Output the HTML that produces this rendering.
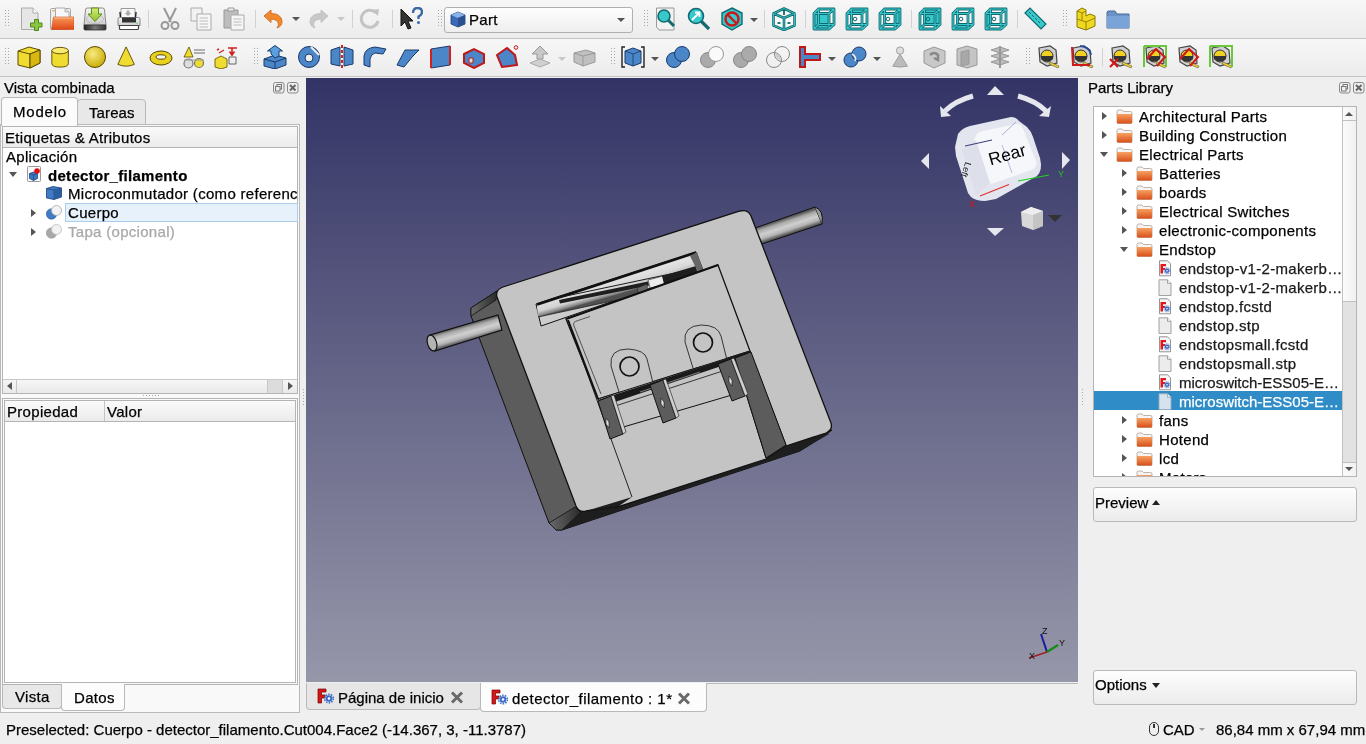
<!DOCTYPE html>
<html><head><meta charset="utf-8">
<style>
*{box-sizing:border-box;margin:0;padding:0}
html,body{width:1366px;height:744px;overflow:hidden;background:#efefef;font-family:"Liberation Sans",sans-serif;font-size:15px;color:#000;position:relative}
.a{position:absolute}
.t{position:absolute;white-space:nowrap;line-height:19px;letter-spacing:0.3px;will-change:transform;-webkit-text-stroke:0.25px currentColor}
.tb{position:absolute;left:0;width:1366px;background:linear-gradient(#f7f7f7,#ececec)}
.grip{position:absolute;width:4px;height:17px;background-image:linear-gradient(90deg,#b4b4b4 1px,transparent 1px),linear-gradient(#efefef 2px,transparent 1px);background-size:3px 3px,3px 3px}
.sep{position:absolute;width:1px;height:18px;background:#d2d2d2}
.dd{position:absolute;width:0;height:0;border-left:4px solid transparent;border-right:4px solid transparent;border-top:4px solid #555}
.ddg{position:absolute;width:0;height:0;border-left:4px solid transparent;border-right:4px solid transparent;border-top:4px solid #bbb}
svg.ic{position:absolute;width:24px;height:24px;overflow:visible}
</style></head><body>

<!-- toolbar row 1 -->
<div class="tb" style="top:0;height:38px"></div>
<div class="a" style="top:38px;left:0;width:1366px;height:1px;background:#c4c4c4"></div>
<div class="tb" style="top:39px;height:37px"></div>
<div class="a" style="top:76px;left:0;width:1366px;height:1px;background:#c4c4c4"></div>

<!-- TB START -->
<svg width="0" height="0" style="position:absolute"><defs>
<linearGradient id="ogr" x1="0" y1="0" x2="0" y2="1"><stop offset="0" stop-color="#f89858"/><stop offset="1" stop-color="#e04818"/></linearGradient>
<linearGradient id="hdd" x1="0" y1="0" x2="0" y2="1"><stop offset="0" stop-color="#f4f4f4"/><stop offset="1" stop-color="#cfcfcf"/></linearGradient><linearGradient id="hdb" x1="0" y1="0" x2="1" y2="0"><stop offset="0" stop-color="#222"/><stop offset="0.5" stop-color="#777"/><stop offset="1" stop-color="#333"/></linearGradient><linearGradient id="grn" x1="0" y1="0" x2="0" y2="1"><stop offset="0" stop-color="#d8ec70"/><stop offset="1" stop-color="#8cc030"/></linearGradient>
<radialGradient id="sgr" cx="0.4" cy="0.35" r="0.7"><stop offset="0" stop-color="#f8ec80"/><stop offset="1" stop-color="#c8a800"/></radialGradient>
</defs></svg>
<svg class="a" style="left:5px;top:10px" width="4" height="18"><rect x="0" y="0" width="1" height="1" fill="#a8a8a8"/><rect x="0" y="3" width="1" height="1" fill="#a8a8a8"/><rect x="0" y="6" width="1" height="1" fill="#a8a8a8"/><rect x="0" y="9" width="1" height="1" fill="#a8a8a8"/><rect x="0" y="12" width="1" height="1" fill="#a8a8a8"/><rect x="0" y="15" width="1" height="1" fill="#a8a8a8"/><rect x="3" y="0" width="1" height="1" fill="#a8a8a8"/><rect x="3" y="3" width="1" height="1" fill="#a8a8a8"/><rect x="3" y="6" width="1" height="1" fill="#a8a8a8"/><rect x="3" y="9" width="1" height="1" fill="#a8a8a8"/><rect x="3" y="12" width="1" height="1" fill="#a8a8a8"/><rect x="3" y="15" width="1" height="1" fill="#a8a8a8"/></svg>
<svg class="a" style="left:19px;top:7px" width="24" height="24" viewBox="0 0 24 24"><path d="M2.5 1 L14 1 L19 6 L19 22.5 L2.5 22.5 Z" fill="#e6e6e6" stroke="#aaa"/><path d="M14 1 L14 6 L19 6" fill="#fff" stroke="#aaa"/><path d="M13 12 L17 12 L17 8.5 L21 8.5 L21 12 L24.5 12 L24.5 16 L21 16 L21 19.5 L17 19.5 L17 16 L13 16 Z" transform="translate(-1.5,4)" fill="#8cc63f" stroke="#4a8a1a"/></svg>
<svg class="a" style="left:50px;top:7px" width="24" height="24" viewBox="0 0 24 24"><rect x="0.5" y="1.5" width="20" height="21" rx="1" fill="#eeeeee" stroke="#a8a8a8"/><path d="M2 3.8 L5 3.8" stroke="#f0a040" stroke-width="1"/><path d="M5.5 1 L15 1 L19 5 L19 12 L5.5 12 Z" fill="#f8f8f8" stroke="#aaa"/><path d="M15 1 L15 5 L19 5" fill="#ddd" stroke="#aaa" stroke-width="0.8"/><path d="M3.5 10 L24 10 L24 22.5 L1.5 22.5 Z" fill="url(#ogr)" stroke="#d04818" stroke-width="0.6"/><path d="M4 11 L23 11" stroke="#fbc090" stroke-width="1"/></svg>
<svg class="a" style="left:83px;top:7px" width="24" height="24" viewBox="0 0 24 24"><path d="M2.5 3 Q2.5 1 4.5 1 L19.5 1 Q21.5 1 21.5 3 L23 18 L1 18 Z" fill="url(#hdd)" stroke="#8a8a8a"/><ellipse cx="12" cy="12" rx="8.5" ry="4.5" fill="none" stroke="#bbb" stroke-width="1"/><path d="M1 18 L23 18 L23 22 Q23 23 22 23 L2 23 Q1 23 1 22 Z" fill="url(#hdb)" stroke="#333" stroke-width="0.8"/><path d="M8.5 1 L15.5 1 L15.5 7 L19 7 L12 14.5 L5 7 L8.5 7 Z" fill="url(#grn)" stroke="#4a8a10" stroke-width="0.9"/></svg>
<svg class="a" style="left:117px;top:7px" width="24" height="24" viewBox="0 0 24 24"><path d="M4 1.5 L18 1.5 L18 11 L4 11 Z" fill="#f8f8f8" stroke="#999"/><path d="M9.5 3.5 L12.5 3.5 L12.5 6 L14.5 6 L11 9 L7.5 6 L9.5 6 Z" fill="#aaa"/><path d="M3 5 L3.5 11 M19 5 L18.5 11" stroke="#222" stroke-width="1.4"/><path d="M1 12 Q1 10.5 2.5 10.5 L21.5 10.5 Q23 10.5 23 12 L23 18.5 L1 18.5 Z" fill="url(#hdd)" stroke="#888"/><path d="M5 10.5 L19 10.5 L19 15.5 L5 15.5 Z" fill="#333"/><circle cx="20" cy="16.2" r="0.8" fill="#6c6"/><path d="M2.5 18.5 L21.5 18.5 L21.5 21.5 Q21.5 22.5 20.5 22.5 L3.5 22.5 Q2.5 22.5 2.5 21.5 Z" fill="#fff" stroke="#444" stroke-width="1.2"/></svg>
<div class="sep" style="left:148px;top:10px"></div>
<svg class="a" style="left:158px;top:7px" width="24" height="24" viewBox="0 0 24 24"><path d="M6 1 L13 15 M18 1 L11 15" stroke="#999" stroke-width="2"/><circle cx="7" cy="18.5" r="3.5" fill="none" stroke="#999" stroke-width="2"/><circle cx="17" cy="18.5" r="3.5" fill="none" stroke="#999" stroke-width="2"/></svg>
<svg class="a" style="left:189px;top:7px" width="24" height="24" viewBox="0 0 24 24"><path d="M2 1 L13 1 L13 14 L2 14 Z" fill="#f2f2f2" stroke="#aaa"/><path d="M8 7 L22 7 L22 23 L8 23 Z" fill="#f6f6f6" stroke="#aaa"/><path d="M10.5 11 L19 11 M10.5 14 L19 14 M10.5 17 L19 17 M10.5 20 L19 20" stroke="#bbb"/></svg>
<svg class="a" style="left:222px;top:7px" width="24" height="24" viewBox="0 0 24 24"><path d="M2 3 L16 3 L16 21 L2 21 Z" fill="#bdbdbd" stroke="#999"/><path d="M6 1 L12 1 L12 4 L6 4 Z" fill="#eee" stroke="#999"/><path d="M9 8 L22 8 L22 23 L9 23 Z" fill="#f6f6f6" stroke="#aaa"/><path d="M11.5 12 L19.5 12 M11.5 15 L19.5 15 M11.5 18 L19.5 18" stroke="#bbb"/></svg>
<div class="sep" style="left:255px;top:10px"></div>
<svg class="a" style="left:261px;top:7px" width="24" height="24" viewBox="0 0 24 24"><path d="M3 9 L10 3 L10 6.5 Q20 6.5 21 14 Q21.5 19 16 21 Q19 17 15.5 13.5 Q13 12 10 12 L10 15.5 Z" fill="#f08a30" stroke="#d06010" stroke-width="0.8"/></svg>
<div class="a" style="left:292px;top:17px;width:0;height:0;border-left:4px solid transparent;border-right:4px solid transparent;border-top:4px solid #555"></div>
<svg class="a" style="left:307px;top:7px" width="24" height="24" viewBox="0 0 24 24"><path d="M21 9 L14 3 L14 6.5 Q4 6.5 3 14 Q2.5 19 8 21 Q5 17 8.5 13.5 Q11 12 14 12 L14 15.5 Z" fill="#c8c8c8" stroke="#bbb" stroke-width="0.8"/></svg>
<div class="a" style="left:337px;top:17px;width:0;height:0;border-left:4px solid transparent;border-right:4px solid transparent;border-top:4px solid #c8c8c8"></div>
<div class="sep" style="left:352px;top:10px"></div>
<svg class="a" style="left:358px;top:7px" width="24" height="24" viewBox="0 0 24 24"><path d="M18 6 A8.5 8.5 0 1 0 20 14" fill="none" stroke="#c4c4c4" stroke-width="3"/><path d="M14 3 L21 2 L20 9 Z" fill="#c4c4c4"/></svg>
<div class="sep" style="left:392px;top:10px"></div>
<svg class="a" style="left:399px;top:7px" width="24" height="24" viewBox="0 0 24 24"><path d="M2 2 L2 19 L6 15 L9 22 L12 21 L9 14 L14 14 Z" fill="#333" stroke="#111"/><path d="M14 6 Q14 1 18.5 1 Q23 1 23 5 Q23 8 19.5 9.5 L19.5 12" fill="none" stroke="#3a6aa8" stroke-width="2.4"/><circle cx="19.5" cy="15.5" r="1.5" fill="#3a6aa8"/></svg>
<svg class="a" style="left:438px;top:10px" width="4" height="18"><rect x="0" y="0" width="1" height="1" fill="#a8a8a8"/><rect x="0" y="3" width="1" height="1" fill="#a8a8a8"/><rect x="0" y="6" width="1" height="1" fill="#a8a8a8"/><rect x="0" y="9" width="1" height="1" fill="#a8a8a8"/><rect x="0" y="12" width="1" height="1" fill="#a8a8a8"/><rect x="0" y="15" width="1" height="1" fill="#a8a8a8"/><rect x="3" y="0" width="1" height="1" fill="#a8a8a8"/><rect x="3" y="3" width="1" height="1" fill="#a8a8a8"/><rect x="3" y="6" width="1" height="1" fill="#a8a8a8"/><rect x="3" y="9" width="1" height="1" fill="#a8a8a8"/><rect x="3" y="12" width="1" height="1" fill="#a8a8a8"/><rect x="3" y="15" width="1" height="1" fill="#a8a8a8"/></svg>
<div class="a" style="left:444px;top:7px;width:189px;height:26px;border:1px solid #b0b0b0;border-radius:3px;background:linear-gradient(#fefefe,#eeeeee)"></div>
<svg class="a" style="left:449px;top:11px" width="17" height="17" viewBox="0 0 17 17"><path d="M2 4 L9 1 L16 4 L16 13 L9 16 L2 13 Z" fill="#3a6ab8" stroke="#1a3a78" stroke-width="0.8"/><path d="M2 4 L9 1 L16 4 L9 7 Z" fill="#8ab4e8"/><path d="M9 7 L16 4 L16 13 L9 16 Z" fill="#2a5090"/></svg>
<div class="t" style="left:469px;top:10px">Part</div>
<div class="a" style="left:617px;top:18px;width:0;height:0;border-left:4px solid transparent;border-right:4px solid transparent;border-top:4px solid #555"></div>
<svg class="a" style="left:644px;top:10px" width="4" height="18"><rect x="0" y="0" width="1" height="1" fill="#a8a8a8"/><rect x="0" y="3" width="1" height="1" fill="#a8a8a8"/><rect x="0" y="6" width="1" height="1" fill="#a8a8a8"/><rect x="0" y="9" width="1" height="1" fill="#a8a8a8"/><rect x="0" y="12" width="1" height="1" fill="#a8a8a8"/><rect x="0" y="15" width="1" height="1" fill="#a8a8a8"/><rect x="3" y="0" width="1" height="1" fill="#a8a8a8"/><rect x="3" y="3" width="1" height="1" fill="#a8a8a8"/><rect x="3" y="6" width="1" height="1" fill="#a8a8a8"/><rect x="3" y="9" width="1" height="1" fill="#a8a8a8"/><rect x="3" y="12" width="1" height="1" fill="#a8a8a8"/><rect x="3" y="15" width="1" height="1" fill="#a8a8a8"/></svg>
<svg class="a" style="left:655px;top:7px" width="24" height="24" viewBox="0 0 24 24"><path d="M1.5 1 L19 1 L19 23 L4 23 L1.5 20 Z" fill="#f2f2f2" stroke="#999"/><circle cx="9" cy="9" r="6" fill="#37c8cc" stroke="#126a70" stroke-width="1.6"/><path d="M13 13 L19 19" stroke="#126a70" stroke-width="3"/></svg>
<svg class="a" style="left:687px;top:7px" width="24" height="24" viewBox="0 0 24 24"><circle cx="9" cy="9" r="7.5" fill="#37c8cc" stroke="#126a70" stroke-width="1.6"/><path d="M14 14 L22 22" stroke="#126a70" stroke-width="3.2"/><path d="M5 13 L12 6 M8 5.5 L12.5 5.5 L12.5 10" stroke="#fff" stroke-width="1.8" fill="none"/></svg>
<svg class="a" style="left:720px;top:7px" width="24" height="24" viewBox="0 0 24 24"><path d="M12 1 L22 6 L22 17 L12 23 L2 17 L2 6 Z" fill="#37c8cc" stroke="#126a70" stroke-width="1.4"/><circle cx="12" cy="12" r="6.5" fill="none" stroke="#c81818" stroke-width="2.4"/><path d="M7.5 7.5 L16.5 16.5" stroke="#c81818" stroke-width="2.4"/></svg>
<div class="a" style="left:750px;top:18px;width:0;height:0;border-left:4px solid transparent;border-right:4px solid transparent;border-top:4px solid #555"></div>
<div class="sep" style="left:764px;top:10px"></div>
<svg class="a" style="left:772px;top:7px" width="24" height="24" viewBox="0 0 24 24"><path d="M12 1.5 L22.5 6.5 L22.5 18.5 L12 23 L1.5 18.5 L1.5 6.5 Z M1.5 6.5 L12 11 L22.5 6.5 M12 11 L12 23" fill="#fafafa" stroke="#126a70" stroke-width="2.6" stroke-linejoin="round"/><path d="M12 1.5 L22.5 6.5 L22.5 18.5 L12 23 L1.5 18.5 L1.5 6.5 Z M1.5 6.5 L12 11 L22.5 6.5 M12 11 L12 23" fill="none" stroke="#37c8cc" stroke-width="0.9" stroke-linejoin="round"/><path d="M12 4 L12 8" stroke="#126a70" stroke-width="1.8"/><ellipse cx="7" cy="16" rx="1.8" ry="1" fill="#126a70"/><ellipse cx="17" cy="16" rx="1.8" ry="1" fill="#126a70"/></svg>
<div class="sep" style="left:805px;top:10px"></div>
<svg class="a" style="left:812px;top:7px" width="24" height="24" viewBox="0 0 24 24"><path d="M2 6.5 L6.5 2 L22 2 L22 17.5 L17 22 L2 22 Z" fill="#f8f8f8"/><path d="M2 6.5 L17 6.5 L17 22 L2 22 Z" fill="#37c8cc"/><path d="M2 6.5 L17 6.5 L17 22 L2 22 Z M6.5 2 L22 2 L22 17.5 L6.5 17.5 Z M2 6.5 L6.5 2 M17 6.5 L22 2 M17 22 L22 17.5 M2 22 L6.5 17.5" fill="none" stroke="#126a70" stroke-width="2.8" stroke-linejoin="round"/><path d="M2 6.5 L17 6.5 L17 22 L2 22 Z M6.5 2 L22 2 L22 17.5 L6.5 17.5 Z M2 6.5 L6.5 2 M17 6.5 L22 2 M17 22 L22 17.5 M2 22 L6.5 17.5" fill="none" stroke="#37c8cc" stroke-width="1.1" stroke-linejoin="round"/></svg>
<svg class="a" style="left:845px;top:7px" width="24" height="24" viewBox="0 0 24 24"><path d="M2 6.5 L6.5 2 L22 2 L22 17.5 L17 22 L2 22 Z" fill="#f8f8f8"/><path d="M2 6.5 L17 6.5 L22 2 L6.5 2 Z" fill="#37c8cc"/><path d="M2 6.5 L17 6.5 L17 22 L2 22 Z M6.5 2 L22 2 L22 17.5 L6.5 17.5 Z M2 6.5 L6.5 2 M17 6.5 L22 2 M17 22 L22 17.5 M2 22 L6.5 17.5" fill="none" stroke="#126a70" stroke-width="2.8" stroke-linejoin="round"/><path d="M2 6.5 L17 6.5 L17 22 L2 22 Z M6.5 2 L22 2 L22 17.5 L6.5 17.5 Z M2 6.5 L6.5 2 M17 6.5 L22 2 M17 22 L22 17.5 M2 22 L6.5 17.5" fill="none" stroke="#37c8cc" stroke-width="1.1" stroke-linejoin="round"/><circle cx="10" cy="12" r="1.8" fill="none" stroke="#126a70" stroke-width="1"/><path d="M6 17 L9 16" stroke="#126a70" stroke-width="1.2"/></svg>
<svg class="a" style="left:878px;top:7px" width="24" height="24" viewBox="0 0 24 24"><path d="M2 6.5 L6.5 2 L22 2 L22 17.5 L17 22 L2 22 Z" fill="#f8f8f8"/><path d="M17 6.5 L22 2 L22 17.5 L17 22 Z" fill="#37c8cc"/><path d="M2 6.5 L17 6.5 L17 22 L2 22 Z M6.5 2 L22 2 L22 17.5 L6.5 17.5 Z M2 6.5 L6.5 2 M17 6.5 L22 2 M17 22 L22 17.5 M2 22 L6.5 17.5" fill="none" stroke="#126a70" stroke-width="2.8" stroke-linejoin="round"/><path d="M2 6.5 L17 6.5 L17 22 L2 22 Z M6.5 2 L22 2 L22 17.5 L6.5 17.5 Z M2 6.5 L6.5 2 M17 6.5 L22 2 M17 22 L22 17.5 M2 22 L6.5 17.5" fill="none" stroke="#37c8cc" stroke-width="1.1" stroke-linejoin="round"/><circle cx="10" cy="12" r="1.8" fill="none" stroke="#126a70" stroke-width="1"/><path d="M6 17 L9 16" stroke="#126a70" stroke-width="1.2"/></svg>
<div class="sep" style="left:911px;top:10px"></div>
<svg class="a" style="left:918px;top:7px" width="24" height="24" viewBox="0 0 24 24"><path d="M2 6.5 L6.5 2 L22 2 L22 17.5 L17 22 L2 22 Z" fill="#f8f8f8"/><path d="M6.5 2 L22 2 L22 17.5 L6.5 17.5 Z" fill="#37c8cc"/><path d="M2 6.5 L17 6.5 L17 22 L2 22 Z M6.5 2 L22 2 L22 17.5 L6.5 17.5 Z M2 6.5 L6.5 2 M17 6.5 L22 2 M17 22 L22 17.5 M2 22 L6.5 17.5" fill="none" stroke="#126a70" stroke-width="2.8" stroke-linejoin="round"/><path d="M2 6.5 L17 6.5 L17 22 L2 22 Z M6.5 2 L22 2 L22 17.5 L6.5 17.5 Z M2 6.5 L6.5 2 M17 6.5 L22 2 M17 22 L22 17.5 M2 22 L6.5 17.5" fill="none" stroke="#37c8cc" stroke-width="1.1" stroke-linejoin="round"/><circle cx="10" cy="12" r="1.8" fill="none" stroke="#126a70" stroke-width="1"/><path d="M6 17 L9 16" stroke="#126a70" stroke-width="1.2"/></svg>
<svg class="a" style="left:951px;top:7px" width="24" height="24" viewBox="0 0 24 24"><path d="M2 6.5 L6.5 2 L22 2 L22 17.5 L17 22 L2 22 Z" fill="#f8f8f8"/><path d="M2 22 L17 22 L22 17.5 L6.5 17.5 Z" fill="#37c8cc"/><path d="M2 6.5 L17 6.5 L17 22 L2 22 Z M6.5 2 L22 2 L22 17.5 L6.5 17.5 Z M2 6.5 L6.5 2 M17 6.5 L22 2 M17 22 L22 17.5 M2 22 L6.5 17.5" fill="none" stroke="#126a70" stroke-width="2.8" stroke-linejoin="round"/><path d="M2 6.5 L17 6.5 L17 22 L2 22 Z M6.5 2 L22 2 L22 17.5 L6.5 17.5 Z M2 6.5 L6.5 2 M17 6.5 L22 2 M17 22 L22 17.5 M2 22 L6.5 17.5" fill="none" stroke="#37c8cc" stroke-width="1.1" stroke-linejoin="round"/><circle cx="10" cy="12" r="1.8" fill="none" stroke="#126a70" stroke-width="1"/><path d="M6 17 L9 16" stroke="#126a70" stroke-width="1.2"/></svg>
<svg class="a" style="left:984px;top:7px" width="24" height="24" viewBox="0 0 24 24"><path d="M2 6.5 L6.5 2 L22 2 L22 17.5 L17 22 L2 22 Z" fill="#f8f8f8"/><path d="M2 6.5 L6.5 2 L6.5 17.5 L2 22 Z" fill="#37c8cc"/><path d="M2 6.5 L17 6.5 L17 22 L2 22 Z M6.5 2 L22 2 L22 17.5 L6.5 17.5 Z M2 6.5 L6.5 2 M17 6.5 L22 2 M17 22 L22 17.5 M2 22 L6.5 17.5" fill="none" stroke="#126a70" stroke-width="2.8" stroke-linejoin="round"/><path d="M2 6.5 L17 6.5 L17 22 L2 22 Z M6.5 2 L22 2 L22 17.5 L6.5 17.5 Z M2 6.5 L6.5 2 M17 6.5 L22 2 M17 22 L22 17.5 M2 22 L6.5 17.5" fill="none" stroke="#37c8cc" stroke-width="1.1" stroke-linejoin="round"/><circle cx="10" cy="12" r="1.8" fill="none" stroke="#126a70" stroke-width="1"/><path d="M6 17 L9 16" stroke="#126a70" stroke-width="1.2"/></svg>
<div class="sep" style="left:1017px;top:10px"></div>
<svg class="a" style="left:1023px;top:7px" width="24" height="24" viewBox="0 0 24 24"><path d="M2 6 L7 1 L23 17 L18 22 Z" fill="#37c8cc" stroke="#126a70" stroke-width="1.2"/><path d="M6 5 L8 7 M9 8 L11 10 M12 11 L14 13 M15 14 L17 16" stroke="#126a70" stroke-width="1"/></svg>
<svg class="a" style="left:1063px;top:10px" width="4" height="18"><rect x="0" y="0" width="1" height="1" fill="#a8a8a8"/><rect x="0" y="3" width="1" height="1" fill="#a8a8a8"/><rect x="0" y="6" width="1" height="1" fill="#a8a8a8"/><rect x="0" y="9" width="1" height="1" fill="#a8a8a8"/><rect x="0" y="12" width="1" height="1" fill="#a8a8a8"/><rect x="0" y="15" width="1" height="1" fill="#a8a8a8"/><rect x="3" y="0" width="1" height="1" fill="#a8a8a8"/><rect x="3" y="3" width="1" height="1" fill="#a8a8a8"/><rect x="3" y="6" width="1" height="1" fill="#a8a8a8"/><rect x="3" y="9" width="1" height="1" fill="#a8a8a8"/><rect x="3" y="12" width="1" height="1" fill="#a8a8a8"/><rect x="3" y="15" width="1" height="1" fill="#a8a8a8"/></svg>
<svg class="a" style="left:1074px;top:7px" width="24" height="24" viewBox="0 0 24 24"><path d="M3 12 L3 20 L12 23 L21 19 L21 9 L16 7 L12 9 L12 3 L8 1 L3 4 Z" fill="#f0d820" stroke="#8a7800" stroke-width="1"/><path d="M3 12 L12 15 L21 11 M12 15 L12 23 M3 4 L8 6 L12 4 M8 6 L8 13" fill="none" stroke="#8a7800" stroke-width="0.9"/></svg>
<svg class="a" style="left:1106px;top:7px" width="24" height="24" viewBox="0 0 24 24"><path d="M1 5 L1 21 L23 21 L23 7 L11 7 L9 4 L2 4 Z" fill="#6a94c8" stroke="#4a6a98"/><path d="M1 9 L23 9 L23 21 L1 21 Z" fill="#7aa4d8"/></svg>
<svg class="a" style="left:5px;top:48px" width="4" height="18"><rect x="0" y="0" width="1" height="1" fill="#a8a8a8"/><rect x="0" y="3" width="1" height="1" fill="#a8a8a8"/><rect x="0" y="6" width="1" height="1" fill="#a8a8a8"/><rect x="0" y="9" width="1" height="1" fill="#a8a8a8"/><rect x="0" y="12" width="1" height="1" fill="#a8a8a8"/><rect x="0" y="15" width="1" height="1" fill="#a8a8a8"/><rect x="3" y="0" width="1" height="1" fill="#a8a8a8"/><rect x="3" y="3" width="1" height="1" fill="#a8a8a8"/><rect x="3" y="6" width="1" height="1" fill="#a8a8a8"/><rect x="3" y="9" width="1" height="1" fill="#a8a8a8"/><rect x="3" y="12" width="1" height="1" fill="#a8a8a8"/><rect x="3" y="15" width="1" height="1" fill="#a8a8a8"/></svg>
<svg class="a" style="left:17px;top:45px" width="24" height="24" viewBox="0 0 24 24"><path d="M1 6 L12 2 L23 5 L23 18 L13 23 L1 20 Z" fill="#f0dc30" stroke="#5a4a00" stroke-width="1"/><path d="M1 6 L13 9 L23 5 M13 9 L13 23" fill="none" stroke="#5a4a00" stroke-width="1"/><path d="M13 9 L23 5 L23 18 L13 23 Z" fill="#d8b810" stroke="#5a4a00" stroke-width="1"/></svg>
<svg class="a" style="left:50px;top:45px" width="22" height="24" viewBox="0 0 24 24"><path d="M2 5 L2 19 Q2 23 11 23 Q20 23 20 19 L20 5 Z" fill="#f0dc30" stroke="#5a4a00"/><ellipse cx="11" cy="5" rx="9" ry="3.5" fill="#f8ec70" stroke="#5a4a00"/></svg>
<svg class="a" style="left:83px;top:45px" width="24" height="24" viewBox="0 0 24 24"><circle cx="12" cy="12" r="10.5" fill="url(#sgr)" stroke="#5a4a00"/></svg>
<svg class="a" style="left:116px;top:45px" width="22" height="24" viewBox="0 0 24 24"><path d="M11 1 L2 20 Q11 24 20 20 Z" fill="#f0dc30" stroke="#5a4a00"/></svg>
<svg class="a" style="left:149px;top:45px" width="24" height="24" viewBox="0 0 24 24"><ellipse cx="12" cy="13" rx="11" ry="7" fill="#e8d020" stroke="#5a4a00"/><ellipse cx="12" cy="12" rx="5" ry="2.2" fill="#f4f4f4" stroke="#5a4a00"/></svg>
<svg class="a" style="left:182px;top:45px" width="24" height="24" viewBox="0 0 24 24"><path d="M2 12 L7 2 L11 12 Z" fill="#f0dc30" stroke="#5a4a00" stroke-width="0.8"/><path d="M12 5 L23 5 M12 8 L23 8" stroke="#999" stroke-width="1.5"/><circle cx="6.5" cy="18.5" r="4.5" fill="#ddd" stroke="#777" stroke-width="1.2"/><circle cx="17" cy="18" r="4.5" fill="#f0dc30" stroke="#777" stroke-width="1.2"/><path d="M2 15 L22 15" stroke="#999"/></svg>
<svg class="a" style="left:214px;top:45px" width="24" height="24" viewBox="0 0 24 24"><path d="M1 14 L7 11 L13 14 L13 22 L7 24 L1 22 Z" fill="#f0dc30" stroke="#5a4a00" stroke-width="0.8"/><path d="M14 3 L23 3 M18 3 L18 9 M15.5 6.5 L18 10 L20.5 6.5" stroke="#d02020" stroke-width="1.6" fill="none"/><path d="M15 12 L22 12 L22 19 L15 19 Z" fill="#eee" stroke="#666"/><path d="M5 8 L10 5 M3 5 L5 4" stroke="#d02020" stroke-width="1.4"/></svg>
<svg class="a" style="left:254px;top:48px" width="4" height="18"><rect x="0" y="0" width="1" height="1" fill="#a8a8a8"/><rect x="0" y="3" width="1" height="1" fill="#a8a8a8"/><rect x="0" y="6" width="1" height="1" fill="#a8a8a8"/><rect x="0" y="9" width="1" height="1" fill="#a8a8a8"/><rect x="0" y="12" width="1" height="1" fill="#a8a8a8"/><rect x="0" y="15" width="1" height="1" fill="#a8a8a8"/><rect x="3" y="0" width="1" height="1" fill="#a8a8a8"/><rect x="3" y="3" width="1" height="1" fill="#a8a8a8"/><rect x="3" y="6" width="1" height="1" fill="#a8a8a8"/><rect x="3" y="9" width="1" height="1" fill="#a8a8a8"/><rect x="3" y="12" width="1" height="1" fill="#a8a8a8"/><rect x="3" y="15" width="1" height="1" fill="#a8a8a8"/></svg>
<svg class="a" style="left:263px;top:45px" width="24" height="24" viewBox="0 0 24 24"><path d="M1 14 L12 10 L23 13 L23 20 L12 24 L1 21 Z" fill="#4a86c8" stroke="#1a3a6a"/><path d="M1 14 L12 17 L23 13 M12 17 L12 24" fill="none" stroke="#1a3a6a"/><path d="M8 9 L8 6 L4.5 6 L12 0.5 L19.5 6 L16 6 L16 11 L12 13 Z" fill="#5aa0e0" stroke="#1a3a6a"/></svg>
<svg class="a" style="left:297px;top:45px" width="24" height="24" viewBox="0 0 24 24"><circle cx="12" cy="12" r="10.5" fill="#4a86c8" stroke="#1a3a6a"/><circle cx="12" cy="13" r="4" fill="#eee" stroke="#1a3a6a"/><path d="M14 2 L22 10" stroke="#eee" stroke-width="2"/></svg>
<svg class="a" style="left:330px;top:45px" width="24" height="24" viewBox="0 0 24 24"><path d="M1 5 L10 2 L10 21 L1 19 Z" fill="#4a86c8" stroke="#1a3a6a"/><path d="M23 5 L14 2 L14 21 L23 19 Z" fill="#4a86c8" stroke="#1a3a6a"/><path d="M12 0 L12 24" stroke="#d02020" stroke-width="2" stroke-dasharray="3 2"/></svg>
<svg class="a" style="left:363px;top:45px" width="24" height="24" viewBox="0 0 24 24"><path d="M1 20 L1 11 Q2 3 12 2 L23 4 L20 9 L12 8 Q8 9 7 14 L7 22 Z" fill="#4a86c8" stroke="#1a3a6a"/></svg>
<svg class="a" style="left:396px;top:45px" width="24" height="24" viewBox="0 0 24 24"><path d="M1 20 L9 5 L23 5 L17 11 L8 22 Z" fill="#4a86c8" stroke="#1a3a6a"/></svg>
<svg class="a" style="left:428px;top:45px" width="24" height="24" viewBox="0 0 24 24"><path d="M3 4 L22 1 L22 20 L3 23 Z" fill="#4a86c8" stroke="#1a3a6a"/><path d="M3 4 L3 23 M22 1 L22 20" stroke="#d02020" stroke-width="2"/></svg>
<svg class="a" style="left:462px;top:45px" width="24" height="24" viewBox="0 0 24 24"><path d="M2 9 L12 4 L22 9 L22 18 L12 23 L2 18 Z" fill="#4a86c8" stroke="#c01818" stroke-width="2"/><path d="M7 13 L11 13 L11 18 L7 18 Z" fill="#ddd" stroke="#c01818"/></svg>
<svg class="a" style="left:495px;top:45px" width="24" height="24" viewBox="0 0 24 24"><path d="M2 10 L12 3 L20 10 L22 20 L7 22 Z" fill="#4a86c8" stroke="#c01818" stroke-width="2"/><circle cx="21" cy="2.5" r="1.8" fill="none" stroke="#c01818"/></svg>
<svg class="a" style="left:528px;top:45px" width="24" height="24" viewBox="0 0 24 24"><path d="M12 1 L20 9 L15 9 L15 14 L9 14 L9 9 L4 9 Z" fill="#c8c8c8" stroke="#999"/><path d="M2 18 L12 14 L22 18 L12 22 Z" fill="#d0d0d0" stroke="#aaa"/></svg>
<div class="a" style="left:558px;top:57px;width:0;height:0;border-left:4px solid transparent;border-right:4px solid transparent;border-top:4px solid #c8c8c8"></div>
<svg class="a" style="left:572px;top:45px" width="24" height="24" viewBox="0 0 24 24"><path d="M2 8 L14 5 L23 8 L23 17 L11 21 L2 17 Z" fill="#c0c0c0" stroke="#999"/><path d="M2 8 L11 11 L23 8 M11 11 L11 21" fill="none" stroke="#999"/></svg>
<svg class="a" style="left:611px;top:48px" width="4" height="18"><rect x="0" y="0" width="1" height="1" fill="#a8a8a8"/><rect x="0" y="3" width="1" height="1" fill="#a8a8a8"/><rect x="0" y="6" width="1" height="1" fill="#a8a8a8"/><rect x="0" y="9" width="1" height="1" fill="#a8a8a8"/><rect x="0" y="12" width="1" height="1" fill="#a8a8a8"/><rect x="0" y="15" width="1" height="1" fill="#a8a8a8"/><rect x="3" y="0" width="1" height="1" fill="#a8a8a8"/><rect x="3" y="3" width="1" height="1" fill="#a8a8a8"/><rect x="3" y="6" width="1" height="1" fill="#a8a8a8"/><rect x="3" y="9" width="1" height="1" fill="#a8a8a8"/><rect x="3" y="12" width="1" height="1" fill="#a8a8a8"/><rect x="3" y="15" width="1" height="1" fill="#a8a8a8"/></svg>
<svg class="a" style="left:621px;top:45px" width="24" height="24" viewBox="0 0 24 24"><path d="M4 2 L1 2 L1 22 L4 22 M20 2 L23 2 L23 22 L20 22" fill="none" stroke="#222" stroke-width="1.4"/><path d="M4 6 L12 3 L20 6 L20 18 L12 21 L4 18 Z" fill="#4a86c8" stroke="#1a3a6a"/><path d="M4 6 L12 9 L20 6 M12 9 L12 21" fill="none" stroke="#1a3a6a" stroke-width="0.8"/></svg>
<div class="a" style="left:651px;top:57px;width:0;height:0;border-left:4px solid transparent;border-right:4px solid transparent;border-top:4px solid #555"></div>
<svg class="a" style="left:666px;top:45px" width="24" height="24" viewBox="0 0 24 24"><circle cx="8" cy="15" r="7.5" fill="#4a86c8" stroke="#1a3a6a"/><circle cx="16" cy="9" r="7.5" fill="#4a86c8" stroke="#1a3a6a"/></svg>
<svg class="a" style="left:700px;top:45px" width="24" height="24" viewBox="0 0 24 24"><circle cx="8" cy="15" r="7.5" fill="#aaa" stroke="#888"/><circle cx="16" cy="9" r="7.5" fill="#fafafa" stroke="#999"/></svg>
<svg class="a" style="left:733px;top:45px" width="24" height="24" viewBox="0 0 24 24"><circle cx="8" cy="15" r="7.5" fill="#aaa" stroke="#888"/><circle cx="16" cy="9" r="7.5" fill="#aaa" stroke="#888"/></svg>
<svg class="a" style="left:766px;top:45px" width="24" height="24" viewBox="0 0 24 24"><circle cx="8" cy="15" r="7.5" fill="none" stroke="#888"/><circle cx="16" cy="9" r="7.5" fill="none" stroke="#888"/><path d="M9 8 A7.5 7.5 0 0 1 15 15 A7.5 7.5 0 0 1 9 8" fill="#ccc"/></svg>
<svg class="a" style="left:798px;top:45px" width="24" height="24" viewBox="0 0 24 24"><path d="M2 2 L7 2 L7 9 L22 9 L22 15 L7 15 L7 22 L2 22 Z" fill="#4a86c8" stroke="#c01818" stroke-width="2"/></svg>
<div class="a" style="left:828px;top:57px;width:0;height:0;border-left:4px solid transparent;border-right:4px solid transparent;border-top:4px solid #555"></div>
<svg class="a" style="left:843px;top:45px" width="24" height="24" viewBox="0 0 24 24"><circle cx="8" cy="15" r="7" fill="#4a86c8" stroke="#1a3a6a"/><circle cx="16" cy="9" r="7" fill="#4a86c8" stroke="#1a3a6a"/><path d="M9 9 Q14 12 12 16" stroke="#eee" stroke-width="1.6" fill="none"/></svg>
<div class="a" style="left:873px;top:57px;width:0;height:0;border-left:4px solid transparent;border-right:4px solid transparent;border-top:4px solid #555"></div>
<svg class="a" style="left:890px;top:45px" width="22" height="24" viewBox="0 0 24 24"><circle cx="11" cy="5" r="4" fill="#ddd" stroke="#999"/><path d="M11 9 L3 22 Q11 24 19 22 Z" fill="#bbb" stroke="#999"/></svg>
<svg class="a" style="left:922px;top:45px" width="24" height="24" viewBox="0 0 24 24"><path d="M2 6 L12 2 L23 6 L23 18 L12 23 L2 18 Z" fill="#c8c8c8" stroke="#999"/><path d="M8 10 Q12 6 16 10 L16 15 L12 13" fill="none" stroke="#888" stroke-width="2.5"/></svg>
<svg class="a" style="left:955px;top:45px" width="24" height="24" viewBox="0 0 24 24"><path d="M2 4 L12 1 L22 4 L22 20 L12 23 L2 20 Z" fill="#c4c4c4" stroke="#999"/><path d="M6 7 L14 5 L14 19 L6 21 Z" fill="#a8a8a8" stroke="#999"/></svg>
<svg class="a" style="left:988px;top:45px" width="24" height="24" viewBox="0 0 24 24"><path d="M3 5 L12 2 L21 5 L12 8 Z M3 11 L12 8 L21 11 L12 14 Z M3 17 L12 14 L21 17 L12 20 Z" fill="#bbb" stroke="#999"/><path d="M12 1 L12 23" stroke="#999" stroke-width="2"/></svg>
<svg class="a" style="left:1026px;top:48px" width="4" height="18"><rect x="0" y="0" width="1" height="1" fill="#a8a8a8"/><rect x="0" y="3" width="1" height="1" fill="#a8a8a8"/><rect x="0" y="6" width="1" height="1" fill="#a8a8a8"/><rect x="0" y="9" width="1" height="1" fill="#a8a8a8"/><rect x="0" y="12" width="1" height="1" fill="#a8a8a8"/><rect x="0" y="15" width="1" height="1" fill="#a8a8a8"/><rect x="3" y="0" width="1" height="1" fill="#a8a8a8"/><rect x="3" y="3" width="1" height="1" fill="#a8a8a8"/><rect x="3" y="6" width="1" height="1" fill="#a8a8a8"/><rect x="3" y="9" width="1" height="1" fill="#a8a8a8"/><rect x="3" y="12" width="1" height="1" fill="#a8a8a8"/><rect x="3" y="15" width="1" height="1" fill="#a8a8a8"/></svg>
<svg class="a" style="left:1036px;top:45px" width="24" height="24" viewBox="0 0 24 24"><path d="M3 3 L14 1 L20 5 L21 18 L11 21 L4 17 Z" fill="#d0d0d0" stroke="#444" stroke-width="1.2"/><circle cx="11" cy="11" r="6" fill="#f0d020" stroke="#333"/><path d="M5 11 L17 11 L17 14 Q11 19 5 14 Z" fill="#333"/><path d="M14 17 L23 21 L22 23 L13 19 Z" fill="#f0d020" stroke="#555" stroke-width="0.6"/></svg>
<svg class="a" style="left:1070px;top:45px" width="24" height="24" viewBox="0 0 24 24"><path d="M3 3 L14 1 L20 5 L21 18 L11 21 L4 17 Z" fill="#d0d0d0" stroke="#444" stroke-width="1.2"/><circle cx="11" cy="11" r="6" fill="#f0d020" stroke="#333"/><path d="M5 11 L17 11 L17 14 Q11 19 5 14 Z" fill="#333"/><path d="M14 17 L23 21 L22 23 L13 19 Z" fill="#f0d020" stroke="#555" stroke-width="0.6"/><path d="M2 2 L3 20 L20 20" fill="none" stroke="#d01818" stroke-width="2"/><path d="M10 1 Q20 2 21 10" fill="none" stroke="#2a4a9a" stroke-width="2"/></svg>
<div class="sep" style="left:1102px;top:48px"></div>
<svg class="a" style="left:1109px;top:45px" width="24" height="24" viewBox="0 0 24 24"><path d="M3 3 L14 1 L20 5 L21 18 L11 21 L4 17 Z" fill="#d0d0d0" stroke="#444" stroke-width="1.2"/><circle cx="11" cy="11" r="6" fill="#f0d020" stroke="#333"/><path d="M5 11 L17 11 L17 14 Q11 19 5 14 Z" fill="#333"/><path d="M14 17 L23 21 L22 23 L13 19 Z" fill="#f0d020" stroke="#555" stroke-width="0.6"/><path d="M1 14 L9 22 M9 14 L1 22" stroke="#d01818" stroke-width="2.2"/></svg>
<svg class="a" style="left:1143px;top:45px" width="24" height="24" viewBox="0 0 24 24"><path d="M3 3 L14 1 L20 5 L21 18 L11 21 L4 17 Z" fill="#d0d0d0" stroke="#444" stroke-width="1.2"/><circle cx="11" cy="11" r="6" fill="#f0d020" stroke="#333"/><path d="M5 11 L17 11 L17 14 Q11 19 5 14 Z" fill="#333"/><path d="M14 17 L23 21 L22 23 L13 19 Z" fill="#f0d020" stroke="#555" stroke-width="0.6"/><path d="M1 1 L23 1 L23 22 M1 1 L1 22" fill="none" stroke="#6ac83a" stroke-width="2"/><path d="M4 14 L13 4 L22 12 L14 21" fill="none" stroke="#d01818" stroke-width="2"/></svg>
<svg class="a" style="left:1176px;top:45px" width="24" height="24" viewBox="0 0 24 24"><path d="M3 3 L14 1 L20 5 L21 18 L11 21 L4 17 Z" fill="#d0d0d0" stroke="#444" stroke-width="1.2"/><circle cx="11" cy="11" r="6" fill="#f0d020" stroke="#333"/><path d="M5 11 L17 11 L17 14 Q11 19 5 14 Z" fill="#333"/><path d="M14 17 L23 21 L22 23 L13 19 Z" fill="#f0d020" stroke="#555" stroke-width="0.6"/><path d="M4 14 L13 4 L22 12 L14 21" fill="none" stroke="#d01818" stroke-width="2"/></svg>
<svg class="a" style="left:1209px;top:45px" width="24" height="24" viewBox="0 0 24 24"><path d="M3 3 L14 1 L20 5 L21 18 L11 21 L4 17 Z" fill="#d0d0d0" stroke="#444" stroke-width="1.2"/><circle cx="11" cy="11" r="6" fill="#f0d020" stroke="#333"/><path d="M5 11 L17 11 L17 14 Q11 19 5 14 Z" fill="#333"/><path d="M14 17 L23 21 L22 23 L13 19 Z" fill="#f0d020" stroke="#555" stroke-width="0.6"/><path d="M1 1 L23 1 L23 22 M1 1 L1 22" fill="none" stroke="#6ac83a" stroke-width="2"/></svg>
<!-- TB END -->
<!-- left panel -->
<div class="t" style="left:4px;top:78px;letter-spacing:0">Vista combinada</div>
<!-- tab frame -->
<div class="a" style="left:0;top:124px;width:300px;height:589px;border:1px solid #b9b9b9;background:#f9f9f9"></div>
<div class="a" style="left:1px;top:97px;width:77px;height:29px;border:1px solid #b9b9b9;border-bottom:none;border-radius:4px 4px 0 0;background:#fbfbfb"></div>
<div class="a" style="left:77px;top:99px;width:69px;height:26px;border:1px solid #b9b9b9;border-radius:4px 4px 0 0;background:#e8e8e8"></div>
<div class="t" style="left:13px;top:102px;letter-spacing:0.8px">Modelo</div>
<div class="t" style="left:89px;top:103px;letter-spacing:0.1px">Tareas</div>
<!-- tree -->
<div class="a" style="left:2px;top:126px;width:296px;height:268px;border:1px solid #b4b4b4;background:#fff"></div>
<div class="a" style="left:3px;top:127px;width:294px;height:21px;border-bottom:1px solid #b4b4b4;background:linear-gradient(#fafafa,#ebebeb)"></div>
<div class="t" style="left:5px;top:128px">Etiquetas &amp; Atributos</div>
<div class="t" style="left:6px;top:147px">Aplicaci&oacute;n</div>
<div class="a" style="left:9px;top:172px;width:0;height:0;border-left:4px solid transparent;border-right:4px solid transparent;border-top:5px solid #555"></div>
<div class="t" style="left:48px;top:166px;font-weight:bold">detector_filamento</div>
<div class="t" style="left:68px;top:184px;width:229px;overflow:hidden">Microconmutador (como referenc</div>
<div class="a" style="left:65px;top:203px;width:233px;height:19px;border:1px solid #a9cdeb;background:#e6f1fb"></div>
<div class="a" style="left:31px;top:209px;width:0;height:0;border-top:4px solid transparent;border-bottom:4px solid transparent;border-left:5px solid #555"></div>
<div class="t" style="left:68px;top:203px">Cuerpo</div>
<div class="a" style="left:31px;top:228px;width:0;height:0;border-top:4px solid transparent;border-bottom:4px solid transparent;border-left:5px solid #555"></div>
<div class="t" style="left:68px;top:222px;color:#a8a8a8">Tapa (opcional)</div>
<!-- h scrollbar -->
<div class="a" style="left:3px;top:379px;width:294px;height:14px;border-top:1px solid #c8c8c8;background:linear-gradient(#f6f6f6,#e9e9e9)"></div>
<div class="a" style="left:16px;top:379px;width:1px;height:14px;background:#c8c8c8"></div>
<div class="a" style="left:267px;top:380px;width:16px;height:13px;background:#dcdcdc;border-left:1px solid #c8c8c8;border-right:1px solid #c8c8c8"></div>
<div class="a" style="left:7px;top:382px;width:0;height:0;border-top:4px solid transparent;border-bottom:4px solid transparent;border-right:5px solid #555"></div>
<div class="a" style="left:288px;top:382px;width:0;height:0;border-top:4px solid transparent;border-bottom:4px solid transparent;border-left:5px solid #555"></div>
<div class="a" style="left:143px;top:395px;width:17px;height:1px;background-image:linear-gradient(90deg,#aaa 1px,transparent 1px);background-size:3px 1px"></div>
<!-- property -->
<div class="a" style="left:2px;top:398px;width:296px;height:287px;border:1px solid #b4b4b4;background:#fafafa"></div>
<div class="a" style="left:4px;top:400px;width:292px;height:283px;border:1px solid #b4b4b4;background:#fff"></div>
<div class="a" style="left:5px;top:401px;width:290px;height:21px;border-bottom:1px solid #b4b4b4;background:linear-gradient(#fafafa,#ebebeb)"></div>
<div class="a" style="left:104px;top:401px;width:1px;height:20px;background:#c4c4c4"></div>
<div class="t" style="left:7px;top:402px">Propiedad</div>
<div class="t" style="left:107px;top:402px">Valor</div>
<!-- bottom tabs -->
<div class="a" style="left:2px;top:685px;width:60px;height:24px;border:1px solid #b9b9b9;border-top:none;border-radius:0 0 4px 4px;background:#e8e8e8"></div>
<div class="a" style="left:61px;top:684px;width:64px;height:27px;border:1px solid #b9b9b9;border-top:none;border-radius:0 0 4px 4px;background:#fcfcfc"></div>
<div class="t" style="left:15px;top:687px">Vista</div>
<div class="t" style="left:74px;top:688px">Datos</div>
<div class="a" style="left:303px;top:389px;width:1px;height:17px;background-image:linear-gradient(#aaa 1px,transparent 1px);background-size:1px 3px"></div>

<!-- viewport -->
<div class="a" id="view" style="left:306px;top:78px;width:772px;height:604px;background:linear-gradient(#333366,#9797aa);will-change:transform">
<svg width="772" height="604" viewBox="306 78 772 604" style="position:absolute;left:0;top:0">
<defs>
<linearGradient id="rod" gradientUnits="userSpaceOnUse" x1="463.8" y1="325.3" x2="468.2" y2="340.7"><stop offset="0" stop-color="#5a5a5a"/><stop offset="0.2" stop-color="#a8a8a8"/><stop offset="0.5" stop-color="#d0d0d0"/><stop offset="0.75" stop-color="#b4b4b4"/><stop offset="1" stop-color="#505050"/></linearGradient><linearGradient id="rod2" gradientUnits="userSpaceOnUse" x1="785.5" y1="218.4" x2="790.5" y2="233.6"><stop offset="0" stop-color="#5a5a5a"/><stop offset="0.2" stop-color="#a8a8a8"/><stop offset="0.5" stop-color="#d0d0d0"/><stop offset="0.75" stop-color="#b4b4b4"/><stop offset="1" stop-color="#505050"/></linearGradient>
<linearGradient id="bar" gradientUnits="userSpaceOnUse" x1="585" y1="289" x2="589" y2="303"><stop offset="0" stop-color="#e2e2e2"/><stop offset="0.6" stop-color="#d2d2d2"/><stop offset="0.88" stop-color="#8a8a8a"/><stop offset="1" stop-color="#505050"/></linearGradient>
<linearGradient id="chf" x1="0" y1="0" x2="1" y2="0"><stop offset="0" stop-color="#6a6a6a"/><stop offset="1" stop-color="#2a2a2a"/></linearGradient>
</defs>
<!-- rods -->
<path d="M755 228 L815 207 L822 224 L762 244 Z" fill="url(#rod2)" stroke="#111" stroke-width="1"/>
<path d="M815 207 Q824 210 822 224" fill="#9a9a9a" stroke="#111" stroke-width="1"/>
<!-- body dark sides -->
<path d="M497 291 L471 308 L471 316 L549 523 L556 530 L562 530 L800 451 L827 434 L832 430 L580 513 Z" fill="#5c5c5c" stroke="#111" stroke-width="1"/>
<path d="M497 291 L471 308 L471 316 L496 300 Z" fill="url(#chf)" stroke="#111" stroke-width="0.8"/>
<path d="M562 530 L800 451 L829 434 L826 433 L786 446 L766 459 L620 506 L586 511 L575 508 Z" fill="#1e1e1e"/>
<path d="M549 523 L556 530 L562 530 L581 512 L575 507 Z" fill="url(#chf)" stroke="#111" stroke-width="0.8"/>
<path d="M430 335 L498 315 L502 330 L435 351 Z" fill="url(#rod)" stroke="#111" stroke-width="1.2"/>
<ellipse cx="432" cy="343" rx="4.5" ry="8.2" transform="rotate(-17 432 343)" fill="#b4b4b4" stroke="#111" stroke-width="1.2"/>
<!-- front face -->
<path d="M503 287 L740 211 Q748 209 751 216 L831 423 Q833 430 826 433 L786 446 L766 459 L620 506 L586 511 Q579 513 576 506 L497 297 Q495 290 503 287 Z" fill="#c4c4c4" stroke="#111" stroke-width="1.3"/>
<!-- channel floor/step -->
<path d="M568 320 L632 497" fill="none" stroke="#111" stroke-width="0.9"/>
<path d="M586 511 L632 497 L619 506 Z" fill="#1e1e1e"/>
<!-- right dark wall -->
<path d="M735 358 L750 351 L786 445 L766 458 Z" fill="#5f5f5f" stroke="#111" stroke-width="1"/>
<!-- top slot -->
<path d="M536 304 L696 252 L703 270 L541 326 Z" fill="#cdcdcd" stroke="#111" stroke-width="1"/>
<path d="M537 306 L696 254 L699 262 L640 281 L640 295 L538 317 Z" fill="url(#bar)"/>
<path d="M537 304.5 L696 252.5" stroke="#111" stroke-width="2.8"/>
<path d="M538 317 L640 295" stroke="#222" stroke-width="0.8"/>
<path d="M559 297.5 L694 269" stroke="#1a1a1a" stroke-width="1"/>
<path d="M559 300 L648 281.5 L649 285.5 L560 303.5 Z" fill="#1e1e1e"/>
<path d="M637 288 L647 284 L648 298 L640 299.5 Z" fill="#666" stroke="#222" stroke-width="0.6"/>
<path d="M648 280 L663 276 L665 284.5 L650 288 Z" fill="#ececec" stroke="#222" stroke-width="0.6"/>
<path d="M662 276 L696 266 L698 276 L664 284 Z" fill="#1e1e1e"/>
<path d="M690 256 L697 252 L703 270 L698 272 Z" fill="#666"/>
<path d="M709 269 L718 264 L720 270 Z" fill="#444"/>
<!-- switch body -->
<path d="M566 319 L718 265 L750 351 L598 399 Z" fill="#c4c4c4" stroke="#111" stroke-width="1.3"/>
<path d="M566 319 L718 265" stroke="#111" stroke-width="2.2"/>
<path d="M568 320 L598 399" stroke="#111" stroke-width="2"/>
<path d="M601 394 L574 326 Q572 322 578 320.5 L590 316.5" fill="none" stroke="#222" stroke-width="0.7"/>
<!-- tabs -->
<path d="M619 392 L611 366 Q609 349 628 349 Q645 350 647 359 L653 383" fill="#c4c4c4" stroke="#111" stroke-width="0.8"/>
<circle cx="629.5" cy="366.5" r="9.5" fill="#c4c4c4" stroke="#111" stroke-width="1.7"/>
<path d="M693 368 L685 342 Q683 326 701 325 Q718 325 721 336 L727 360" fill="#c4c4c4" stroke="#111" stroke-width="0.8"/>
<circle cx="703" cy="342.5" r="9.5" fill="#c4c4c4" stroke="#111" stroke-width="1.7"/>
<!-- terminal strip -->
<path d="M598 399 L750 351 L742 392 L620 428 Z" fill="#c4c4c4" stroke="#111" stroke-width="1"/>
<path d="M598 400 L750 351 L745 358 L606 405 Z" fill="#1a1a1a"/>
<path d="M640 392 L700 372" stroke="#777" stroke-width="1.2"/>
<path d="M606 409 L738 366" stroke="#111" stroke-width="0.8"/>
<!-- right dark wall -->
<path d="M735 358 L751 352 L786 445 L766 458 Z" fill="#5c5c5c" stroke="#111" stroke-width="1"/>
<!-- terminals -->
<path d="M598 401 L611 396 L623 434 L610 439 Z" fill="#5c5c5c" stroke="#111" stroke-width="1"/>
<path d="M650 385 L663 380 L676 418 L663 423 Z" fill="#5c5c5c" stroke="#111" stroke-width="1"/>
<path d="M718 364 L731 359 L745 396 L732 401 Z" fill="#5c5c5c" stroke="#111" stroke-width="1"/>
<path d="M611 396 L614 395 L626 432 L623 434 Z" fill="#d0d0d0" stroke="#111" stroke-width="0.6"/>
<path d="M663 380 L666 379 L679 416 L676 418 Z" fill="#d0d0d0" stroke="#111" stroke-width="0.6"/>
<path d="M731 359 L734 358 L748 394 L745 396 Z" fill="#d0d0d0" stroke="#111" stroke-width="0.6"/>
<path d="M661 398 L664 402 L664 408 L661 404 Z" fill="#e0e0e0" stroke="#111" stroke-width="0.6"/>
<path d="M729 376 L732 380 L732 386 L729 382 Z" fill="#e0e0e0" stroke="#111" stroke-width="0.6"/>
<path d="M606 418 L609 422 L609 428 L606 424 Z" fill="#e0e0e0" stroke="#111" stroke-width="0.6"/>
<!-- navicube -->
<path d="M987 95 L995 86 L1004 95 Z" fill="#e6e6ee"/>
<path d="M987 228 L995 236 L1004 228 Z" fill="#e6e6ee"/>
<path d="M929 153 L921 161 L929 169 Z" fill="#e6e6ee"/>
<path d="M1062 152 L1070 160 L1062 169 Z" fill="#e6e6ee"/>
<path d="M973 96 Q955 101 945 111" fill="none" stroke="#e6e6ee" stroke-width="5"/>
<path d="M940 106 L941 117 L951 116 Z" fill="#e6e6ee"/>
<path d="M1018 96 Q1036 101 1046 111" fill="none" stroke="#e6e6ee" stroke-width="5"/>
<path d="M1051 106 L1049 117 L1039 116 Z" fill="#e6e6ee"/>
<path d="M958 134 Q962 128 970 126 L1011 117 Q1016 117 1019 121 L1027 127 Q1031 131 1033 137 L1040 158 Q1043 170 1037 176 L996 199 L985 201 Q976 201 971 197 L968 193 L956 156 L955 147 Z" fill="#e3e6ee"/>
<path d="M976 136 Q977 132 983 131 L1016 124 Q1021 124 1023 129 L1036 161 Q1038 167 1032 170 L994 183 Q989 185 987 180 L974 145 Q973 140 976 136 Z" fill="#f6f7fb"/>
<path d="M962 150 L976 140 L990 183 L976 196 Z" fill="#dde0ea"/>
<path d="M965 146 L992 140" stroke="#3a3a78" stroke-width="1"/>
<path d="M1002 135 L1016 122" stroke="#a8b0d8" stroke-width="1"/>
<path d="M1002 145 L1012 173" stroke="#b0b8e0" stroke-width="1"/>
<text x="1007" y="160.5" font-size="17.5" font-family="Liberation Sans" fill="#000" transform="rotate(-16 1007 154)" text-anchor="middle">Rear</text>
<text x="967" y="174" font-size="9" font-family="Liberation Sans" fill="#111" transform="rotate(108 967 170)" text-anchor="middle">Left</text>
<path d="M980 196 L1009 184.5" stroke="#e03030" stroke-width="1.2"/>
<path d="M1018 181 L1049 175" stroke="#20d020" stroke-width="1.2"/>
<text x="969" y="207" font-size="9" fill="#e01010" font-family="Liberation Sans">X</text>
<text x="1058" y="177" font-size="9" fill="#20c020" font-family="Liberation Sans">Y</text>
<path d="M1021 212 L1031 207 L1043 211 L1043 226 L1033 230 L1022 226 Z" fill="#d8d8d8"/>
<path d="M1021 212 L1031 207 L1043 211 L1033 215 Z" fill="#eee"/>
<path d="M1033 215 L1043 211 L1043 226 L1033 230 Z" fill="#c4c4c4"/>
<path d="M1048 215 L1062 215 L1055 222 Z" fill="#333"/>
<!-- axis triad -->
<path d="M1047 652 L1041 634" stroke="#1a1aa0" stroke-width="2"/>
<path d="M1047 652 L1058 645" stroke="#188a18" stroke-width="2.5"/>
<path d="M1047 652 L1029 658" stroke="#a02020" stroke-width="1.6"/>
<text x="1042" y="634" font-size="9" fill="#111" font-family="Liberation Sans">Z</text>
<text x="1059" y="646" font-size="9" fill="#111" font-family="Liberation Sans">Y</text>
<text x="1029" y="659" font-size="9" fill="#111" font-family="Liberation Sans">X</text>
</svg>
</div>

<!-- right panel -->
<svg width="0" height="0" style="position:absolute"><defs><linearGradient id="fg" x1="0" y1="0" x2="0" y2="1"><stop offset="0" stop-color="#f7a060"/><stop offset="1" stop-color="#d8501a"/></linearGradient></defs></svg>
<div class="t" style="left:1088px;top:78px;letter-spacing:0">Parts Library</div>
<div class="a" style="left:1093px;top:106px;width:264px;height:371px;border:1px solid #b4b4b4;background:#fff;overflow:hidden">
<div class="a" style="left:248px;top:0;width:14px;height:369px;background:linear-gradient(90deg,#fbfbfb,#f1f1f1);border-left:1px solid #c0c0c0"></div>
<div class="a" style="left:249px;top:194px;width:13px;height:162px;background:#e2e2e2;border-top:1px solid #c0c0c0;border-bottom:1px solid #c0c0c0"></div>
<div class="a" style="left:249px;top:13px;width:13px;height:1px;background:#c0c0c0"></div>
<div class="a" style="left:251px;top:5px;width:0;height:0;border-left:4px solid transparent;border-right:4px solid transparent;border-bottom:4px solid #555"></div>
<div class="a" style="left:251px;top:360px;width:0;height:0;border-left:4px solid transparent;border-right:4px solid transparent;border-top:4px solid #555"></div>
</div>
<div class="a" style="left:1094px;top:107px;width:248px;height:369px;overflow:hidden">
<div class="a" style="left:-1094px;top:-107px;width:1366px;height:744px">
<div class="a" style="left:1102px;top:112px;width:0;height:0;border-top:4px solid transparent;border-bottom:4px solid transparent;border-left:5px solid #555"></div>
<svg class="a" style="left:1116px;top:109px" width="17" height="15" viewBox="0 0 17 15"><path d="M1 2.5 Q1 1 2.5 1 L6 1 L7.5 2.5 L14.5 2.5 Q16 2.5 16 4 L16 13.5 Q16 14.5 15 14.5 L2 14.5 Q1 14.5 1 13.5 Z" fill="#f4f4f4" stroke="#b0a090" stroke-width="0.8"/><path d="M1 5 L16 5 L16 13.5 Q16 14.5 15 14.5 L2 14.5 Q1 14.5 1 13.5 Z" fill="url(#fg)"/></svg>
<div class="t" style="left:1139px;top:107px">Architectural Parts</div>
<div class="a" style="left:1102px;top:131px;width:0;height:0;border-top:4px solid transparent;border-bottom:4px solid transparent;border-left:5px solid #555"></div>
<svg class="a" style="left:1116px;top:128px" width="17" height="15" viewBox="0 0 17 15"><path d="M1 2.5 Q1 1 2.5 1 L6 1 L7.5 2.5 L14.5 2.5 Q16 2.5 16 4 L16 13.5 Q16 14.5 15 14.5 L2 14.5 Q1 14.5 1 13.5 Z" fill="#f4f4f4" stroke="#b0a090" stroke-width="0.8"/><path d="M1 5 L16 5 L16 13.5 Q16 14.5 15 14.5 L2 14.5 Q1 14.5 1 13.5 Z" fill="url(#fg)"/></svg>
<div class="t" style="left:1139px;top:126px">Building Construction</div>
<div class="a" style="left:1100px;top:152px;width:0;height:0;border-left:4px solid transparent;border-right:4px solid transparent;border-top:5px solid #555"></div>
<svg class="a" style="left:1116px;top:147px" width="17" height="15" viewBox="0 0 17 15"><path d="M1 2.5 Q1 1 2.5 1 L6 1 L7.5 2.5 L14.5 2.5 Q16 2.5 16 4 L16 13.5 Q16 14.5 15 14.5 L2 14.5 Q1 14.5 1 13.5 Z" fill="#f4f4f4" stroke="#b0a090" stroke-width="0.8"/><path d="M1 5 L16 5 L16 13.5 Q16 14.5 15 14.5 L2 14.5 Q1 14.5 1 13.5 Z" fill="url(#fg)"/></svg>
<div class="t" style="left:1139px;top:145px">Electrical Parts</div>
<div class="a" style="left:1122px;top:169px;width:0;height:0;border-top:4px solid transparent;border-bottom:4px solid transparent;border-left:5px solid #555"></div>
<svg class="a" style="left:1136px;top:166px" width="17" height="15" viewBox="0 0 17 15"><path d="M1 2.5 Q1 1 2.5 1 L6 1 L7.5 2.5 L14.5 2.5 Q16 2.5 16 4 L16 13.5 Q16 14.5 15 14.5 L2 14.5 Q1 14.5 1 13.5 Z" fill="#f4f4f4" stroke="#b0a090" stroke-width="0.8"/><path d="M1 5 L16 5 L16 13.5 Q16 14.5 15 14.5 L2 14.5 Q1 14.5 1 13.5 Z" fill="url(#fg)"/></svg>
<div class="t" style="left:1159px;top:164px">Batteries</div>
<div class="a" style="left:1122px;top:188px;width:0;height:0;border-top:4px solid transparent;border-bottom:4px solid transparent;border-left:5px solid #555"></div>
<svg class="a" style="left:1136px;top:185px" width="17" height="15" viewBox="0 0 17 15"><path d="M1 2.5 Q1 1 2.5 1 L6 1 L7.5 2.5 L14.5 2.5 Q16 2.5 16 4 L16 13.5 Q16 14.5 15 14.5 L2 14.5 Q1 14.5 1 13.5 Z" fill="#f4f4f4" stroke="#b0a090" stroke-width="0.8"/><path d="M1 5 L16 5 L16 13.5 Q16 14.5 15 14.5 L2 14.5 Q1 14.5 1 13.5 Z" fill="url(#fg)"/></svg>
<div class="t" style="left:1159px;top:183px">boards</div>
<div class="a" style="left:1122px;top:207px;width:0;height:0;border-top:4px solid transparent;border-bottom:4px solid transparent;border-left:5px solid #555"></div>
<svg class="a" style="left:1136px;top:204px" width="17" height="15" viewBox="0 0 17 15"><path d="M1 2.5 Q1 1 2.5 1 L6 1 L7.5 2.5 L14.5 2.5 Q16 2.5 16 4 L16 13.5 Q16 14.5 15 14.5 L2 14.5 Q1 14.5 1 13.5 Z" fill="#f4f4f4" stroke="#b0a090" stroke-width="0.8"/><path d="M1 5 L16 5 L16 13.5 Q16 14.5 15 14.5 L2 14.5 Q1 14.5 1 13.5 Z" fill="url(#fg)"/></svg>
<div class="t" style="left:1159px;top:202px">Electrical Switches</div>
<div class="a" style="left:1122px;top:226px;width:0;height:0;border-top:4px solid transparent;border-bottom:4px solid transparent;border-left:5px solid #555"></div>
<svg class="a" style="left:1136px;top:223px" width="17" height="15" viewBox="0 0 17 15"><path d="M1 2.5 Q1 1 2.5 1 L6 1 L7.5 2.5 L14.5 2.5 Q16 2.5 16 4 L16 13.5 Q16 14.5 15 14.5 L2 14.5 Q1 14.5 1 13.5 Z" fill="#f4f4f4" stroke="#b0a090" stroke-width="0.8"/><path d="M1 5 L16 5 L16 13.5 Q16 14.5 15 14.5 L2 14.5 Q1 14.5 1 13.5 Z" fill="url(#fg)"/></svg>
<div class="t" style="left:1159px;top:221px">electronic-components</div>
<div class="a" style="left:1120px;top:247px;width:0;height:0;border-left:4px solid transparent;border-right:4px solid transparent;border-top:5px solid #555"></div>
<svg class="a" style="left:1136px;top:242px" width="17" height="15" viewBox="0 0 17 15"><path d="M1 2.5 Q1 1 2.5 1 L6 1 L7.5 2.5 L14.5 2.5 Q16 2.5 16 4 L16 13.5 Q16 14.5 15 14.5 L2 14.5 Q1 14.5 1 13.5 Z" fill="#f4f4f4" stroke="#b0a090" stroke-width="0.8"/><path d="M1 5 L16 5 L16 13.5 Q16 14.5 15 14.5 L2 14.5 Q1 14.5 1 13.5 Z" fill="url(#fg)"/></svg>
<div class="t" style="left:1159px;top:240px">Endstop</div>
<svg class="a" style="left:1158px;top:260px" width="14" height="17" viewBox="0 0 14 17"><path d="M1.5 0.8 L9.5 0.8 L12.5 3.8 L12.5 15.8 L1.5 15.8 Z" fill="#f6f6f6" stroke="#888" stroke-width="0.9"/><path d="M2.5 4 L8 4 L8 6.2 L5 6.2 L5 8 L7.2 8 L7.2 10 L5 10 L5 13.5 L2.5 13.5 Z" fill="#e01818"/><circle cx="9" cy="10.8" r="2.9" fill="none" stroke="#3a6ac8" stroke-width="1" stroke-dasharray="1.1 0.9"/><circle cx="9" cy="10.8" r="2.2" fill="#3a6ac8"/><circle cx="9" cy="10.8" r="0.8" fill="#fff"/></svg>
<div class="t" style="left:1179px;top:259px;color:#1a1a1a">endstop-v1-2-makerb…</div>
<svg class="a" style="left:1158px;top:279px" width="14" height="17" viewBox="0 0 14 17"><path d="M1 0.8 L9.5 0.8 L13 4.3 L13 16.5 L1 16.5 Z" fill="#ececec" stroke="#999" stroke-width="0.9"/><path d="M9.5 0.8 L9.5 4.3 L13 4.3" fill="#f8f8f8" stroke="#999" stroke-width="0.9"/></svg>
<div class="t" style="left:1179px;top:278px;color:#1a1a1a">endstop-v1-2-makerb…</div>
<svg class="a" style="left:1158px;top:298px" width="14" height="17" viewBox="0 0 14 17"><path d="M1.5 0.8 L9.5 0.8 L12.5 3.8 L12.5 15.8 L1.5 15.8 Z" fill="#f6f6f6" stroke="#888" stroke-width="0.9"/><path d="M2.5 4 L8 4 L8 6.2 L5 6.2 L5 8 L7.2 8 L7.2 10 L5 10 L5 13.5 L2.5 13.5 Z" fill="#e01818"/><circle cx="9" cy="10.8" r="2.9" fill="none" stroke="#3a6ac8" stroke-width="1" stroke-dasharray="1.1 0.9"/><circle cx="9" cy="10.8" r="2.2" fill="#3a6ac8"/><circle cx="9" cy="10.8" r="0.8" fill="#fff"/></svg>
<div class="t" style="left:1179px;top:297px;color:#1a1a1a">endstop.fcstd</div>
<svg class="a" style="left:1158px;top:317px" width="14" height="17" viewBox="0 0 14 17"><path d="M1 0.8 L9.5 0.8 L13 4.3 L13 16.5 L1 16.5 Z" fill="#ececec" stroke="#999" stroke-width="0.9"/><path d="M9.5 0.8 L9.5 4.3 L13 4.3" fill="#f8f8f8" stroke="#999" stroke-width="0.9"/></svg>
<div class="t" style="left:1179px;top:316px;color:#1a1a1a">endstop.stp</div>
<svg class="a" style="left:1158px;top:336px" width="14" height="17" viewBox="0 0 14 17"><path d="M1.5 0.8 L9.5 0.8 L12.5 3.8 L12.5 15.8 L1.5 15.8 Z" fill="#f6f6f6" stroke="#888" stroke-width="0.9"/><path d="M2.5 4 L8 4 L8 6.2 L5 6.2 L5 8 L7.2 8 L7.2 10 L5 10 L5 13.5 L2.5 13.5 Z" fill="#e01818"/><circle cx="9" cy="10.8" r="2.9" fill="none" stroke="#3a6ac8" stroke-width="1" stroke-dasharray="1.1 0.9"/><circle cx="9" cy="10.8" r="2.2" fill="#3a6ac8"/><circle cx="9" cy="10.8" r="0.8" fill="#fff"/></svg>
<div class="t" style="left:1179px;top:335px;color:#1a1a1a">endstopsmall.fcstd</div>
<svg class="a" style="left:1158px;top:355px" width="14" height="17" viewBox="0 0 14 17"><path d="M1 0.8 L9.5 0.8 L13 4.3 L13 16.5 L1 16.5 Z" fill="#ececec" stroke="#999" stroke-width="0.9"/><path d="M9.5 0.8 L9.5 4.3 L13 4.3" fill="#f8f8f8" stroke="#999" stroke-width="0.9"/></svg>
<div class="t" style="left:1179px;top:354px;color:#1a1a1a">endstopsmall.stp</div>
<svg class="a" style="left:1158px;top:374px" width="14" height="17" viewBox="0 0 14 17"><path d="M1.5 0.8 L9.5 0.8 L12.5 3.8 L12.5 15.8 L1.5 15.8 Z" fill="#f6f6f6" stroke="#888" stroke-width="0.9"/><path d="M2.5 4 L8 4 L8 6.2 L5 6.2 L5 8 L7.2 8 L7.2 10 L5 10 L5 13.5 L2.5 13.5 Z" fill="#e01818"/><circle cx="9" cy="10.8" r="2.9" fill="none" stroke="#3a6ac8" stroke-width="1" stroke-dasharray="1.1 0.9"/><circle cx="9" cy="10.8" r="2.2" fill="#3a6ac8"/><circle cx="9" cy="10.8" r="0.8" fill="#fff"/></svg>
<div class="t" style="left:1179px;top:373px;color:#1a1a1a;letter-spacing:0">microswitch-ESS05-E…</div>
<div class="a" style="left:1094px;top:391px;width:248px;height:19px;background:#308cc6"></div>
<svg class="a" style="left:1158px;top:393px" width="14" height="17" viewBox="0 0 14 17"><path d="M1 0.8 L9.5 0.8 L13 4.3 L13 16.5 L1 16.5 Z" fill="#d6e2ee" stroke="#9ab" stroke-width="0.9"/><path d="M9.5 0.8 L9.5 4.3 L13 4.3" fill="#e8f0f8" stroke="#9ab" stroke-width="0.9"/></svg>
<div class="t" style="left:1179px;top:392px;color:#fff;letter-spacing:0">microswitch-ESS05-E…</div>
<div class="a" style="left:1122px;top:416px;width:0;height:0;border-top:4px solid transparent;border-bottom:4px solid transparent;border-left:5px solid #555"></div>
<svg class="a" style="left:1136px;top:413px" width="17" height="15" viewBox="0 0 17 15"><path d="M1 2.5 Q1 1 2.5 1 L6 1 L7.5 2.5 L14.5 2.5 Q16 2.5 16 4 L16 13.5 Q16 14.5 15 14.5 L2 14.5 Q1 14.5 1 13.5 Z" fill="#f4f4f4" stroke="#b0a090" stroke-width="0.8"/><path d="M1 5 L16 5 L16 13.5 Q16 14.5 15 14.5 L2 14.5 Q1 14.5 1 13.5 Z" fill="url(#fg)"/></svg>
<div class="t" style="left:1159px;top:411px">fans</div>
<div class="a" style="left:1122px;top:435px;width:0;height:0;border-top:4px solid transparent;border-bottom:4px solid transparent;border-left:5px solid #555"></div>
<svg class="a" style="left:1136px;top:432px" width="17" height="15" viewBox="0 0 17 15"><path d="M1 2.5 Q1 1 2.5 1 L6 1 L7.5 2.5 L14.5 2.5 Q16 2.5 16 4 L16 13.5 Q16 14.5 15 14.5 L2 14.5 Q1 14.5 1 13.5 Z" fill="#f4f4f4" stroke="#b0a090" stroke-width="0.8"/><path d="M1 5 L16 5 L16 13.5 Q16 14.5 15 14.5 L2 14.5 Q1 14.5 1 13.5 Z" fill="url(#fg)"/></svg>
<div class="t" style="left:1159px;top:430px">Hotend</div>
<div class="a" style="left:1122px;top:454px;width:0;height:0;border-top:4px solid transparent;border-bottom:4px solid transparent;border-left:5px solid #555"></div>
<svg class="a" style="left:1136px;top:451px" width="17" height="15" viewBox="0 0 17 15"><path d="M1 2.5 Q1 1 2.5 1 L6 1 L7.5 2.5 L14.5 2.5 Q16 2.5 16 4 L16 13.5 Q16 14.5 15 14.5 L2 14.5 Q1 14.5 1 13.5 Z" fill="#f4f4f4" stroke="#b0a090" stroke-width="0.8"/><path d="M1 5 L16 5 L16 13.5 Q16 14.5 15 14.5 L2 14.5 Q1 14.5 1 13.5 Z" fill="url(#fg)"/></svg>
<div class="t" style="left:1159px;top:449px">lcd</div>
<div class="a" style="left:1122px;top:473px;width:0;height:0;border-top:4px solid transparent;border-bottom:4px solid transparent;border-left:5px solid #555"></div>
<svg class="a" style="left:1136px;top:470px" width="17" height="15" viewBox="0 0 17 15"><path d="M1 2.5 Q1 1 2.5 1 L6 1 L7.5 2.5 L14.5 2.5 Q16 2.5 16 4 L16 13.5 Q16 14.5 15 14.5 L2 14.5 Q1 14.5 1 13.5 Z" fill="#f4f4f4" stroke="#b0a090" stroke-width="0.8"/><path d="M1 5 L16 5 L16 13.5 Q16 14.5 15 14.5 L2 14.5 Q1 14.5 1 13.5 Z" fill="url(#fg)"/></svg>
<div class="t" style="left:1159px;top:468px">Motors</div>
</div></div>
<div class="a" style="left:1093px;top:487px;width:264px;height:35px;border:1px solid #b9b9b9;border-radius:3px;background:linear-gradient(#fdfdfd,#ececec)"></div>
<div class="t" style="left:1095px;top:493px;letter-spacing:0">Preview</div>
<div class="a" style="left:1152px;top:500px;width:0;height:0;border-left:4px solid transparent;border-right:4px solid transparent;border-bottom:5px solid #222"></div>
<div class="a" style="left:1093px;top:670px;width:264px;height:35px;border:1px solid #b9b9b9;border-radius:3px;background:linear-gradient(#fdfdfd,#ececec)"></div>
<div class="t" style="left:1095px;top:675px;letter-spacing:0">Options</div>
<div class="a" style="left:1152px;top:683px;width:0;height:0;border-left:4.5px solid transparent;border-right:4.5px solid transparent;border-top:5px solid #222"></div>
<div class="a" style="left:1082px;top:389px;width:1px;height:16px;background-image:linear-gradient(#aaa 1px,transparent 1px);background-size:1px 3px"></div>
<!-- viewport tabs -->
<div class="a" style="left:306px;top:683px;width:772px;height:1px;background:#b9b9b9"></div>
<div class="a" style="left:306px;top:683px;width:175px;height:27px;border:1px solid #b9b9b9;border-top:none;border-radius:0 0 4px 4px;background:#e6e6e6"></div>
<div class="a" style="left:480px;top:683px;width:227px;height:29px;border:1px solid #b9b9b9;border-top:none;border-radius:0 0 4px 4px;background:#fcfcfc"></div>
<div class="t" style="left:338px;top:688px;letter-spacing:0">P&aacute;gina de inicio</div>
<div class="t" style="left:512px;top:689px;letter-spacing:0.45px">detector_filamento : 1*</div>

<!-- TREEICONS -->
<svg class="a" style="left:27px;top:166px" width="14" height="16" viewBox="0 0 14 16"><rect x="0.5" y="0.5" width="13" height="15" rx="1" fill="#f8f8f8" stroke="#999"/><path d="M2.5 7.5 L6.5 6 L10.5 7.5 L10.5 12.5 L6.5 14.5 L2.5 12.5 Z" fill="#3a78c0" stroke="#1a3a78" stroke-width="0.7"/><path d="M2.5 7.5 L6.5 9 L10.5 7.5 M6.5 9 L6.5 14.5" fill="none" stroke="#1a3a78" stroke-width="0.6"/><circle cx="10" cy="5" r="2.8" fill="#e01010"/></svg>
<svg class="a" style="left:46px;top:186px" width="16" height="14" viewBox="0 0 16 14"><path d="M0.5 2.5 L7 0.5 L15.5 2 L15.5 11 L8 13.5 L0.5 12 Z" fill="#3f7cc4" stroke="#1c3f78" stroke-width="0.8"/><path d="M0.5 2.5 L8 4 L15.5 2 M8 4 L8 13.5" fill="none" stroke="#1c3f78" stroke-width="0.7"/><path d="M8 4 L15.5 2 L15.5 11 L8 13.5 Z" fill="#2d5fa0"/></svg>
<svg class="a" style="left:46px;top:205px" width="16" height="15" viewBox="0 0 16 15"><circle cx="5.5" cy="9" r="5.2" fill="#3f7cc4" stroke="#2a5a98" stroke-width="0.6"/><circle cx="10.5" cy="5.5" r="5" fill="#f2f2f2" stroke="#aaa" stroke-width="0.8"/></svg>
<svg class="a" style="left:46px;top:224px" width="16" height="15" viewBox="0 0 16 15"><circle cx="5.5" cy="9" r="5.2" fill="#a8a8a8" stroke="#999" stroke-width="0.6"/><circle cx="10.5" cy="5.5" r="5" fill="#f2f2f2" stroke="#bbb" stroke-width="0.8"/></svg>
<svg class="a" style="left:273px;top:82px" width="26" height="12" viewBox="0 0 26 12"><rect x="0.5" y="0.5" width="10.5" height="10.5" rx="2" fill="none" stroke="#888"/><rect x="4" y="2.5" width="4.5" height="4.5" fill="none" stroke="#777"/><rect x="2.5" y="4.5" width="4.5" height="4.5" fill="#f0f0f0" stroke="#777"/><rect x="14.5" y="0.5" width="10.5" height="10.5" rx="2" fill="none" stroke="#888"/><path d="M17 3 L22.5 8.5 M22.5 3 L17 8.5" stroke="#666" stroke-width="2"/></svg>
<svg class="a" style="left:1339px;top:82px" width="26" height="12" viewBox="0 0 26 12"><rect x="0.5" y="0.5" width="10.5" height="10.5" rx="2" fill="#efefef" stroke="#888"/><rect x="4" y="2.5" width="4.5" height="4.5" fill="none" stroke="#777"/><rect x="2.5" y="4.5" width="4.5" height="4.5" fill="#f0f0f0" stroke="#777"/><rect x="14.5" y="0.5" width="10.5" height="10.5" rx="2" fill="#efefef" stroke="#888"/><path d="M17 3 L22.5 8.5 M22.5 3 L17 8.5" stroke="#666" stroke-width="2"/></svg>
<svg class="a" style="left:317px;top:688px" width="17" height="16" viewBox="0 0 17 16"><path d="M1 1 L9 1 L9 4 L4.5 4 L4.5 7 L8 7 L8 10 L4.5 10 L4.5 15 L1 15 Z" fill="#d41818" stroke="#700" stroke-width="0.7"/><circle cx="12" cy="10.5" r="4.3" fill="none" stroke="#3a6ac8" stroke-width="1.6" stroke-dasharray="1.5 1.2"/><circle cx="12" cy="10.5" r="3.2" fill="#3a6ac8"/><circle cx="12" cy="10.5" r="1.3" fill="#fff"/></svg>
<svg class="a" style="left:491px;top:689px" width="17" height="16" viewBox="0 0 17 16"><path d="M1 1 L9 1 L9 4 L4.5 4 L4.5 7 L8 7 L8 10 L4.5 10 L4.5 15 L1 15 Z" fill="#d41818" stroke="#700" stroke-width="0.7"/><circle cx="12" cy="10.5" r="4.3" fill="none" stroke="#3a6ac8" stroke-width="1.6" stroke-dasharray="1.5 1.2"/><circle cx="12" cy="10.5" r="3.2" fill="#3a6ac8"/><circle cx="12" cy="10.5" r="1.3" fill="#fff"/></svg>
<svg class="a" style="left:450px;top:691px" width="14" height="13" viewBox="0 0 14 13"><path d="M2 1.5 L12 11.5 M12 1.5 L2 11.5" stroke="#6a6a6a" stroke-width="3"/></svg>
<svg class="a" style="left:677px;top:692px" width="14" height="13" viewBox="0 0 14 13"><path d="M2 1.5 L12 11.5 M12 1.5 L2 11.5" stroke="#6a6a6a" stroke-width="3"/></svg>
<!-- /TREEICONS -->
<!-- status -->
<div class="t" style="left:1163px;top:720px;letter-spacing:0">CAD</div>
<div class="t" style="left:1216px;top:720px;letter-spacing:0">86,84 mm x 67,94 mm</div>
<div class="a" style="left:1149px;top:722px;width:10px;height:14px;border:1.5px solid #333;border-radius:5px"></div>
<div class="a" style="left:1153px;top:724px;width:1.5px;height:4px;background:#333"></div>
<div class="a" style="left:1199px;top:728px;width:0;height:0;border-left:3px solid transparent;border-right:3px solid transparent;border-top:3px solid #999"></div>
<div class="t" style="left:6px;top:720px;letter-spacing:0">Preselected: Cuerpo - detector_filamento.Cut004.Face2 (-14.367, 3, -11.3787)</div>

</body></html>
